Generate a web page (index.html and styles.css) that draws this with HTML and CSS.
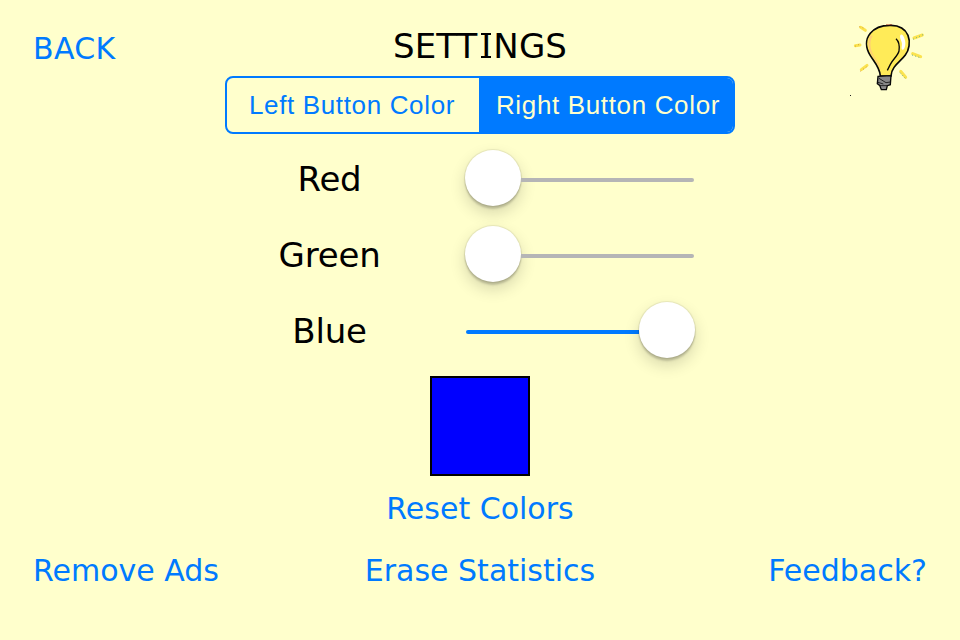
FILE: index.html
```
<!DOCTYPE html>
<html lang="en">
<head>
<meta charset="utf-8">
<title>Settings</title>
<link rel="stylesheet" href="styles.css">
</head>
<body>
<main class="screen">
  <header class="header">
    <a class="link back">BACK</a>
    <h1 class="title">SETT<span class="slab">I</span>NGS</h1>
    <svg class="bulb" width="100" height="76" viewBox="0 0 300 228">
      <g fill="none" stroke="#fbe34f" stroke-width="9" stroke-linecap="round">
        <path d="M62 22L76 31M46 77L60 75M64 149L81 136M222 54L247 45M218 101L242 110M182 154L197 172"/>
      </g>
      <g fill="none" stroke="#c98a38" stroke-width="2.5" stroke-dasharray="3 7">
        <path d="M58 20L70 24M45 79L60 72M61 154L82 139"/>
        <path stroke="#58a58b" d="M219 58L251 43M216 105L243 114M180 158L198 177"/>
      </g>
      <path fill="#ffeb58" stroke="#080808" stroke-width="5" d="M121 168C119 141 101 124 91 107C76 83 76 58 91 40C107 20 130 16 149 16C177 15 196 27 204 46C212 66 207 91 196 105C182 124 154 139 153 168Z"/>
      <path fill="#ffce75" d="M92 45C81 64 84 87 95 104C104 121 118 135 122 149C122 129 98 111 94 90C89 71 92 58 98 48Z"/>
      <path fill="#fff" d="M181 45C187 38 196 54 196 70C196 81 192 91 187 89C182 84 188 76 185 67C183 58 178 52 181 45Z"/>
      <path fill="none" stroke="#080808" stroke-width="4" d="M168 56C178 65 179 79 177 93C173 108 158 119 151 133L142 151"/>
      <path fill="#888" stroke="#080808" stroke-width="4" d="M114 169L153 167L151 194L142 197L139 209L124 209L119 196L112 191Z"/>
      <path fill="none" stroke="#111" stroke-width="2.5" d="M117 175L138 188L151 186M114 187L130 192M120 197L142 197"/>
      <path stroke="#a33a24" stroke-width="2" d="M138 14H156"/>
      <rect x="30" y="225" width="3" height="3" fill="#222"/>
    </svg>
  </header>

  <div class="segments">
    <button class="segment seg-left"><span>Left Button Color</span></button>
    <button class="segment seg-right active"><span>Right Button Color</span></button>
  </div>

  <section class="sliders">
    <div class="row"><span class="label">Red</span><div class="slider"><i class="thumb"></i><i class="track"></i></div></div>
    <div class="row"><span class="label">Green</span><div class="slider"><i class="thumb"></i><i class="track"></i></div></div>
    <div class="row"><span class="label">Blue</span><div class="slider full"><i class="track"></i><i class="thumb"></i></div></div>
  </section>

  <div class="swatch"></div>
  <a class="link reset">Reset Colors</a>

  <footer class="footer">
    <a class="link remove">Remove Ads</a>
    <a class="link erase">Erase Statistics</a>
    <a class="link feedback">Feedback?</a>
  </footer>
</main>
</body>
</html>
```
FILE: styles.css
```
* { box-sizing: border-box; }
body { margin: 0; background: #ffffcc; }
.screen {
  width: 960px;
  height: 640px;
  overflow: hidden;
  display: flex;
  flex-direction: column;
  align-items: center;
  background: #ffffcc;
  color: #000;
  font-family: Verdana, "DejaVu Sans", sans-serif;
}
.link { color: #007aff; font-size: 30px; line-height: 36px; white-space: nowrap; }
.header {
  width: 100%;
  height: 76px;
  display: grid;
  grid-template-columns: 1fr auto 1fr;
  align-items: start;
}
.back { padding: 31px 0 0 33px; letter-spacing: .3px; }
.title { margin: 0; padding-top: 26px; font-size: 34px; line-height: 40px; font-weight: 400; letter-spacing: .1px; }
.slab { position: relative; display: inline-block; padding-left: 2px; text-align: center; width: 16px; }
.slab::before, .slab::after {
  content: "";
  position: absolute;
  left: 4px;
  width: 10px;
  height: 2px;
  background: #000;
}
.slab::before { top: 7px; }
.slab::after { top: 30px; }
.bulb { justify-self: end; margin: 20px 20px 0 0; overflow: visible; }

.segments {
  width: 510px;
  height: 58px;
  display: flex;
  border: 2px solid #007aff;
  border-radius: 8px;
  overflow: hidden;
}
.segment {
  padding: 0;
  border: 0;
  background: transparent;
  color: #007aff;
  font: 26px/54px "Liberation Sans", sans-serif;
  letter-spacing: .65px;
  white-space: nowrap;
}
.seg-left { width: 252px; padding-right: 2px; }
.seg-right { flex: 1; padding-left: 4px; }
.active { background: #007aff; color: #ffffcc; }

.sliders { width: 510px; padding-top: 6px; }
.row { height: 76px; display: flex; align-items: center; }
.label { width: 208px; padding: 2px 0 0 1px; text-align: center; font-size: 34px; line-height: 40px; letter-spacing: -.2px; }
.slider { width: 231px; margin-left: 32px; display: flex; align-items: center; }
.track { width: 173px; height: 4px; margin-top: 4px; background: #b5b5b6; border-radius: 0 2px 2px 0; }
.thumb {
  flex: none;
  width: 56px;
  height: 56px;
  border-radius: 50%;
  background: #fff;
  box-shadow: 0 0 1px 1px rgba(0,0,0,.08), 0 3px 2px rgba(0,0,0,.17), 0 7px 16px rgba(0,0,0,.16);
}
.full { padding-left: 1px; }
.full .track { background: #007aff; border-radius: 2px 0 0 2px; }

.swatch { width: 100px; height: 100px; margin-top: 8px; border: 2px solid #000; background: #00f; flex: none; }
.reset { margin-top: 15px; }
.footer {
  width: 100%;
  margin-top: 26px;
  padding: 0 33px;
  display: grid;
  grid-template-columns: 1fr auto 1fr;
}
.feedback { justify-self: end; }
```
